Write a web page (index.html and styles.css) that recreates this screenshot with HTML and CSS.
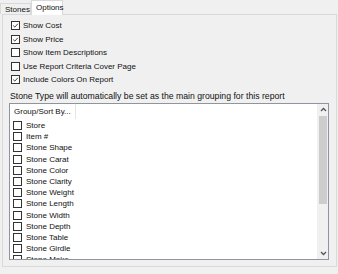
FILE: index.html
```html
<!DOCTYPE html>
<html>
<head>
<meta charset="utf-8">
<link rel="stylesheet" href="styles.css">
</head>
<body>
<div class="tabs">
  <div class="tab">Stones</div>
  <div class="tab active">Options</div>
</div>
<div class="panel">
  <div class="checks">
    <label class="row"><span class="cb checked"><svg viewBox="0 0 9 9"><path d="M1.5 4.5 L3.6 6.6 L7.6 2.2" fill="none" stroke="#222" stroke-width="1.1"/></svg></span>Show Cost</label>
    <label class="row"><span class="cb checked"><svg viewBox="0 0 9 9"><path d="M1.5 4.5 L3.6 6.6 L7.6 2.2" fill="none" stroke="#222" stroke-width="1.1"/></svg></span>Show Price</label>
    <label class="row"><span class="cb"></span>Show Item Descriptions</label>
    <label class="row"><span class="cb"></span>Use Report Criteria Cover Page</label>
    <label class="row"><span class="cb checked"><svg viewBox="0 0 9 9"><path d="M1.5 4.5 L3.6 6.6 L7.6 2.2" fill="none" stroke="#222" stroke-width="1.1"/></svg></span>Include Colors On Report</label>
  </div>
  <div class="note">Stone Type will automatically be set as the main grouping for this report</div>
  <div class="listbox">
    <div class="list">
      <div class="header"><div class="hcol">Group/Sort By...</div></div>
      <div class="item"><span class="cb"></span>Store</div>
      <div class="item"><span class="cb"></span>Item #</div>
      <div class="item"><span class="cb"></span>Stone Shape</div>
      <div class="item"><span class="cb"></span>Stone Carat</div>
      <div class="item"><span class="cb"></span>Stone Color</div>
      <div class="item"><span class="cb"></span>Stone Clarity</div>
      <div class="item"><span class="cb"></span>Stone Weight</div>
      <div class="item"><span class="cb"></span>Stone Length</div>
      <div class="item"><span class="cb"></span>Stone Width</div>
      <div class="item"><span class="cb"></span>Stone Depth</div>
      <div class="item"><span class="cb"></span>Stone Table</div>
      <div class="item"><span class="cb"></span>Stone Girdle</div>
      <div class="item"><span class="cb"></span>Stone Make</div>
    </div>
    <div class="scrollbar">
      <div class="arrow"><svg viewBox="0 0 7 5" width="7" height="5"><path d="M1 4 L3.5 1.5 L6 4" fill="none" stroke="#555" stroke-width="1.3"/></svg></div>
      <div class="track"><div class="thumb"></div></div>
      <div class="arrow"><svg viewBox="0 0 7 5" width="7" height="5"><path d="M1 1 L3.5 3.5 L6 1" fill="none" stroke="#555" stroke-width="1.3"/></svg></div>
    </div>
  </div>
</div>
</body>
</html>
```
FILE: styles.css
```css
* { box-sizing: border-box; }
html, body { margin: 0; padding: 0; }
body {
  width: 338px;
  height: 274px;
  background: #f0f0f0;
  font-family: "Liberation Sans", Arial, sans-serif;
  font-size: 8px;
  color: #111;
  padding: 0 2px 0 2px;
  overflow: hidden;
}
.tabs {
  display: flex;
  align-items: flex-end;
  height: 14px;
  position: relative;
  z-index: 1;
}
.tab {
  height: 11px;
  padding: 0 4px;
  border: 1px solid #d9d9d9;
  border-bottom: none;
  background: #f0f0f0;
  display: flex;
  align-items: center;
  width: 31px;
  margin-left: -2px;
}
.tab.active {
  height: 15px;
  margin-bottom: -1px;
  margin-left: 0;
  background: #fff;
  width: 32px;
  padding-bottom: 2px;
}
.panel {
  border: 1px solid #d9d9d9;
  background: #f0f0f0;
  width: 335px;
  height: 253px;
  padding: 4px 6px 0 6px;
}
.checks { display: flex; flex-direction: column; }
.row {
  display: flex;
  align-items: center;
  height: 13.5px;
  padding-left: 2px;
}
.cb {
  width: 9px;
  height: 9px;
  border: 1px solid #333;
  background: #fff;
  margin-right: 3px;
  flex: none;
  display: flex;
}
.cb svg { width: 7px; height: 7px; }
.note {
  margin-top: 3.5px;
  height: 12px;
  padding-left: 1px;
  display: flex;
  align-items: center;
  font-size: 8.7px;
}
.listbox {
  margin-top: 1px;
  width: 320px;
  height: 157px;
  border: 1px solid #8e959e;
  background: #fff;
  display: flex;
  overflow: hidden;
}
.list { flex: 1; overflow: hidden; }
.header { height: 16px; display: flex; }
.hcol {
  width: 66px;
  border-right: 1px solid #e5e5e5;
  padding-left: 4px;
  display: flex;
  align-items: center;
  height: 15px;
}
.item {
  height: 11.2px;
  display: flex;
  align-items: center;
  padding-left: 3px;
}
.item .cb { width: 9px; height: 9px; margin-right: 4px; }
.scrollbar {
  width: 11px;
  background: #f0f0f0;
  display: flex;
  flex-direction: column;
  border-left: 1px solid #f0f0f0;
}
.arrow {
  height: 11px;
  display: flex;
  align-items: center;
  justify-content: center;
}
.track { flex: 1; }
.thumb {
  margin: 1px 1px 0 1px;
  height: 88px;
  background: #cdcdcd;
}
```
